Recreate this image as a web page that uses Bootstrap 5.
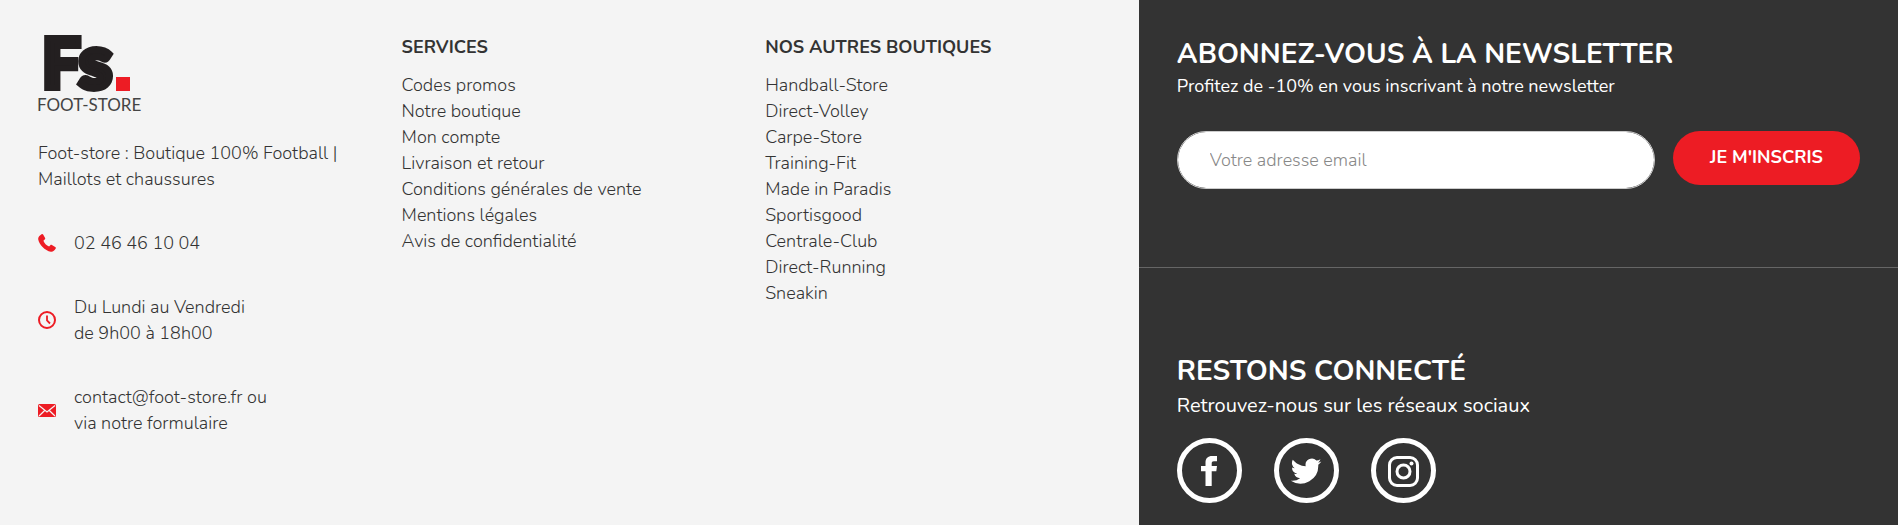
<!DOCTYPE html>
<html lang="fr">
<head>
<meta charset="utf-8">
<meta name="viewport" content="width=device-width, initial-scale=1">
<title>Foot-Store</title>
<link href="https://cdn.jsdelivr.net/npm/bootstrap@5.3.0/dist/css/bootstrap.min.css" rel="stylesheet">
<style>
  body { font-family: Nunito, Lato, sans-serif; font-size: 18px; line-height: 26px; color: #333; background: #f4f4f4; }
  a { color: inherit; text-decoration: none; }
  a:hover { text-decoration: underline; }
  .footer-info { flex: 0 0 60%; padding: 34px 24px 0; font-weight: 300; }
  .footer-side { background: #333; color: #fff; }
  .footer-col { padding: 0 14px; }
  .footer-title { font-size: 18px; line-height: 26px; font-weight: 700; margin-bottom: 12px; }
  .contact-line { gap: 18px; margin-top: 38px; }
  .contact-line svg { flex: none; }
  .brand-logo { margin-bottom: 28px; }
  .brand-logo svg { overflow: visible; }
  .side-block { padding: 0 38px; }
  .newsletter { padding-top: 36px; padding-bottom: 78px; border-bottom: 1px solid #666; }
  .social { padding-top: 85px; padding-bottom: 20px; }
  .side-title { font-size: 28px; line-height: 36px; font-weight: 700; margin: 0; }
  .side-text { font-size: 18px; line-height: 28px; margin: 0; }
  .social .side-text { font-size: 20px; line-height: 34px; }
  .newsletter form { gap: 18px; margin-top: 31px; }
  .email-field { height: 58px; padding: 0 32px; border: 1px solid #ccc; border-radius: 29px; font-size: 18px; font-weight: 300; }
  .email-field::placeholder { color: #888; }
  .join-btn { flex: 0 0 187px; height: 54px; border-radius: 27px; background: #ed1c24; color: #fff; font-size: 18px; font-weight: 700; padding: 0 0 2px; }
  .join-btn:hover { background: #c9151c; color: #fff; }
  .social-links { gap: 32px; margin-top: 15px; }
  .social-links a { width: 65px; height: 65px; border: 5px solid #fff; }
</style>
</head>
<body>
<footer class="d-flex min-vh-100">
  <div class="footer-info">
    <div class="row g-0">
      <div class="col-4 footer-col">
        <a href="#" class="d-block brand-logo" aria-label="Foot-Store">
          <svg class="d-block" width="102" height="78" viewBox="0 0 102 78">
            <g font-family="Lato, sans-serif" font-weight="900" fill="#231f20" stroke="#231f20">
              <text x="4" y="54" font-size="68" stroke-width="6">F</text><text x="41" y="54" font-size="74" stroke-width="7">s</text>
            </g>
            <rect x="78" y="43" width="14" height="14" fill="#ed1c24"/>
            <text x="-1" y="77" font-family="Lato, sans-serif" font-weight="400" font-size="17" fill="#444">FOOT-STORE</text>
          </svg>
        </a>
        <p class="mb-0">Foot-store : Boutique 100% Football |<br>Maillots et chaussures</p>
        <div class="d-flex align-items-center contact-line">
          <svg width="18" height="18" viewBox="0 0 18 18" fill="#ed1c24"><path d="M3.6.3C4.200-.1 4.900.1 5.300.8L7.100 4c.3.600.1 1.200-.4 1.600L5.400 6.700c.9 2.400 3 4.700 5.700 5.900l1.200-1.300c.4-.5 1-.6 1.600-.3l3.300 1.900c.7.400.9 1.100.500 1.700-1.100 2.100-2.900 3.400-4.800 3.100C6.800 16.700 1 10.500.2 5.200-.1 3.300 1.500 1.500 3.600.3Z"/></svg>
          <span>02 46 46 10 04</span>
        </div>
        <div class="d-flex align-items-center contact-line">
          <svg width="18" height="18" viewBox="0 0 18 18" fill="none" stroke="#ed1c24" stroke-width="2"><circle cx="9" cy="9" r="8"/><path d="M9 4.500V9.500L12 12.500" stroke-width="1.800"/></svg>
          <span>Du Lundi au Vendredi<br>de 9h00 à 18h00</span>
        </div>
        <div class="d-flex align-items-center contact-line">
          <svg width="18" height="13" viewBox="0 0 18 13"><rect width="18" height="13" rx="1.500" fill="#ed1c24"/><path d="M1 1.500l8 6.500 8-6.500M1 12l5.700-5.500M17 12l-5.700-5.500" fill="none" stroke="#f4f4f4" stroke-width="1.200"/></svg>
          <span><a href="mailto:contact@foot-store.fr">contact@foot-store.fr</a> ou<br><a href="#">via notre formulaire</a></span>
        </div>
      </div>
      <nav class="col-4 footer-col" aria-labelledby="services">
        <h2 class="footer-title" id="services">SERVICES</h2>
        <ul class="list-unstyled mb-0">
          <li><a href="#">Codes promos</a></li>
          <li><a href="#">Notre boutique</a></li>
          <li><a href="#">Mon compte</a></li>
          <li><a href="#">Livraison et retour</a></li>
          <li><a href="#">Conditions générales de vente</a></li>
          <li><a href="#">Mentions légales</a></li>
          <li><a href="#">Avis de confidentialité</a></li>
        </ul>
      </nav>
      <nav class="col-4 footer-col" aria-labelledby="boutiques">
        <h2 class="footer-title" id="boutiques">NOS AUTRES BOUTIQUES</h2>
        <ul class="list-unstyled mb-0">
          <li><a href="#">Handball-Store</a></li>
          <li><a href="#">Direct-Volley</a></li>
          <li><a href="#">Carpe-Store</a></li>
          <li><a href="#">Training-Fit</a></li>
          <li><a href="#">Made in Paradis</a></li>
          <li><a href="#">Sportisgood</a></li>
          <li><a href="#">Centrale-Club</a></li>
          <li><a href="#">Direct-Running</a></li>
          <li><a href="#">Sneakin</a></li>
        </ul>
      </nav>
    </div>
  </div>
  <div class="footer-side flex-fill">
    <section class="side-block newsletter">
      <h2 class="side-title">ABONNEZ-VOUS À LA NEWSLETTER</h2>
      <p class="side-text">Profitez de -10% en vous inscrivant à notre newsletter</p>
      <form class="d-flex align-items-start">
        <label for="email" class="visually-hidden">Votre adresse email</label>
        <input type="email" id="email" class="form-control email-field" placeholder="Votre adresse email">
        <button type="submit" class="btn join-btn">JE M'INSCRIS</button>
      </form>
    </section>
    <section class="side-block social">
      <h2 class="side-title">RESTONS CONNECTÉ</h2>
      <p class="side-text">Retrouvez-nous sur les réseaux sociaux</p>
      <div class="d-flex social-links">
        <a href="#" class="rounded-circle d-flex align-items-center justify-content-center" aria-label="Facebook">
          <svg width="32" height="32" viewBox="0 0 32 32" fill="#fff"><path d="M24 1v5.300h-3.100c-1.600 0-2.200.8-2.200 2.200V11H24l-.7 5.200h-4.600V31h-6.200V16.200H8V11h4.500V7.600C12.500 3.200 15 1 19 1Z"/></svg>
        </a>
        <a href="#" class="rounded-circle d-flex align-items-center justify-content-center" aria-label="Twitter">
          <svg width="32" height="32" viewBox="0 0 24 24" fill="#fff"><path d="M23.500 4.900c-.8.400-1.700.6-2.700.8 1-.6 1.700-1.500 2-2.600-.9.500-1.900.9-3 1.100a4.700 4.700 0 0 0-8 4.300C7.900 8.300 4.400 6.400 2.100 3.600a4.700 4.700 0 0 0 1.500 6.300c-.8 0-1.500-.2-2.100-.6a4.700 4.700 0 0 0 3.800 4.700c-.7.200-1.400.2-2.100.1a4.700 4.700 0 0 0 4.400 3.300A9.500 9.500 0 0 1 .6 19.300a13.400 13.400 0 0 0 20.600-11.900c.9-.7 1.700-1.500 2.300-2.500Z"/></svg>
        </a>
        <a href="#" class="rounded-circle d-flex align-items-center justify-content-center" aria-label="Instagram">
          <svg width="32" height="32" viewBox="0 0 32 32" fill="none" stroke="#fff" stroke-width="3"><rect x="2.500" y="2.500" width="28" height="28" rx="7.500"/><circle cx="16.500" cy="16.500" r="6.500"/><circle cx="24.500" cy="8.500" r="2" fill="#fff" stroke="none"/></svg>
        </a>
      </div>
    </section>
  </div>
</footer>
<script src="https://cdn.jsdelivr.net/npm/bootstrap@5.3.0/dist/js/bootstrap.bundle.min.js"></script>
</body>
</html>
